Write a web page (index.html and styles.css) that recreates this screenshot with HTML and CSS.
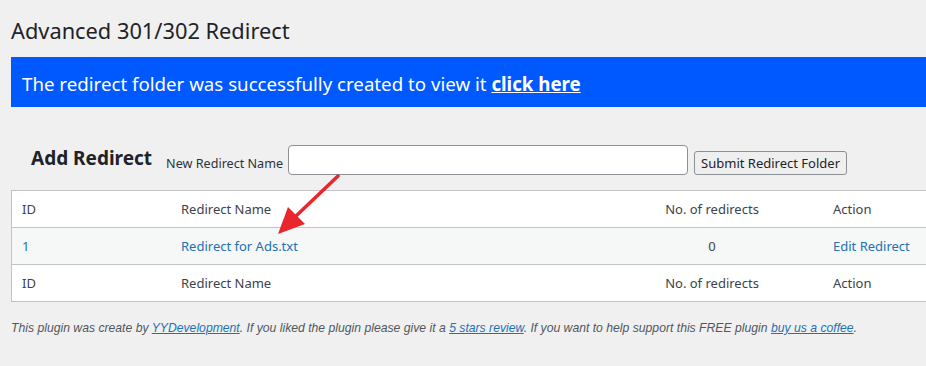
FILE: index.html
```html
<!DOCTYPE html>
<html lang="en">

<head>
    <meta charset="UTF-8">
    <meta name="viewport" content="width=device-width, initial-scale=1.0">
    <title>Advanced 301/302 Redirect</title>
    <link rel="stylesheet" href="styles.css">
</head>

<body>
    <section class="wrap">
        <h1 class="page-title">Advanced 301/302 Redirect</h1>

        <section class="notice">
            <span>The redirect folder was successfully created to view it <a href="#">click here</a></span>
        </section>

        <!-- add redirect form -->
        <form class="add-form">
            <h2 class="add-title">Add Redirect</h2>
            <label class="add-label" for="name">New Redirect Name</label>
            <input class="add-input" type="text" id="name">
            <button class="add-button" type="button">Submit Redirect Folder</button>
        </form>

        <section class="table-wrap">
            <section class="redirects">
                <section class="row row-head">
                    <span class="cell">ID</span>
                    <span class="cell">Redirect Name</span>
                    <span class="cell cell-count">No. of redirects</span>
                    <span class="cell cell-action">Action</span>
                </section>
                <section class="row row-alt">
                    <span class="cell"><a href="#">1</a></span>
                    <span class="cell"><a href="#">Redirect for Ads.txt</a></span>
                    <span class="cell cell-count">0</span>
                    <span class="cell cell-action"><a href="#">Edit Redirect</a></span>
                </section>
                <section class="row row-foot">
                    <span class="cell">ID</span>
                    <span class="cell">Redirect Name</span>
                    <span class="cell cell-count">No. of redirects</span>
                    <span class="cell cell-action">Action</span>
                </section>
            </section>

            <svg class="arrow" width="80" height="70" viewBox="0 0 80 70">
                <line x1="76" y1="2" x2="34" y2="42" stroke="#e8262b" stroke-width="3.5" stroke-linecap="round" />
                <polygon points="16,60 26,33 43,50" fill="#e8262b" />
            </svg>
        </section>

        <p class="credits">This plugin was create by <a href="#">YYDevelopment</a>. If you liked the plugin please give it a <a href="#">5 stars review</a>. If you want to help support this FREE plugin <a href="#">buy us a coffee</a>.</p>
    </section>
</body>

</html>
```

FILE: styles.css
```css
body {
    margin: 0;
    padding: 0;
    background-color: #f0f0f1;
    color: #3c434a;
    font-family: "Noto Sans", "Open Sans", sans-serif;
    overflow: hidden;
}

.wrap {
    padding: 0 0 0 11px;
    width: 960px;
}

.page-title {
    margin: 0;
    padding: 17px 0 0 0;
    height: 40px;
    font-size: 21.8px;
    font-weight: 400;
    color: #1d2327;
    line-height: 28px;
}

.notice {
    height: 50px;
    background-color: #0059ff;
    color: #fff;
    display: flex;
    align-items: center;
    padding-left: 11px;
    font-size: 18.7px;
    padding-top: 2px;
    box-sizing: border-box;
}

.notice a {
    color: #fff;
    font-weight: 700;
}

.add-form {
    display: flex;
    align-items: center;
    height: 30px;
    margin: 38px 0 0 0;
}

.add-title {
    margin: 0 0 0 20px;
    font-size: 19px;
    font-weight: 700;
    color: #1d2327;
    position: relative;
    top: -2px;
}

.add-label {
    margin-left: 14px;
    font-size: 12.6px;
    color: #2c3338;
    position: relative;
    top: 3px;
}

.add-input {
    margin: 0 0 0 5px;
    width: 400px;
    height: 30px;
    box-sizing: border-box;
    border: 1px solid #8c8f94;
    border-radius: 4px;
    background: #fff;
}

.add-button {
    margin-left: 6px;
    height: 24px;
    padding: 0 6px;
    font-family: "Noto Sans", "Open Sans", sans-serif;
    font-size: 13px;
    color: #1d2327;
    background-color: #efeff0;
    border: 1px solid #8c8f94;
    border-radius: 3px;
    position: relative;
    top: 3px;
}

.table-wrap {
    position: relative;
    margin-top: 15px;
}

.redirects {
    border: 1px solid #c3c4c7;
    background-color: #fff;
}

.row {
    display: grid;
    grid-template-columns: 159px 450px 182px 1fr;
    height: 36px;
    align-items: center;
    font-size: 13px;
}

.row + .row {
    border-top: 1px solid #c3c4c7;
}

.row-alt {
    background-color: #f6f7f7;
}

.cell {
    padding-left: 10px;
}

.cell-count {
    padding-left: 0;
    text-align: center;
}

.cell-action {
    padding-left: 30px;
}

.row a {
    color: #2271b1;
    text-decoration: none;
}

.arrow {
    position: absolute;
    left: 251px;
    top: -16px;
}

.credits {
    margin: 19px 0 0 0;
    font-family: "Liberation Sans", Arial, sans-serif;
    font-style: italic;
    font-size: 12.2px;
    color: #50575e;
}

.credits a {
    color: #2271b1;
}
```
